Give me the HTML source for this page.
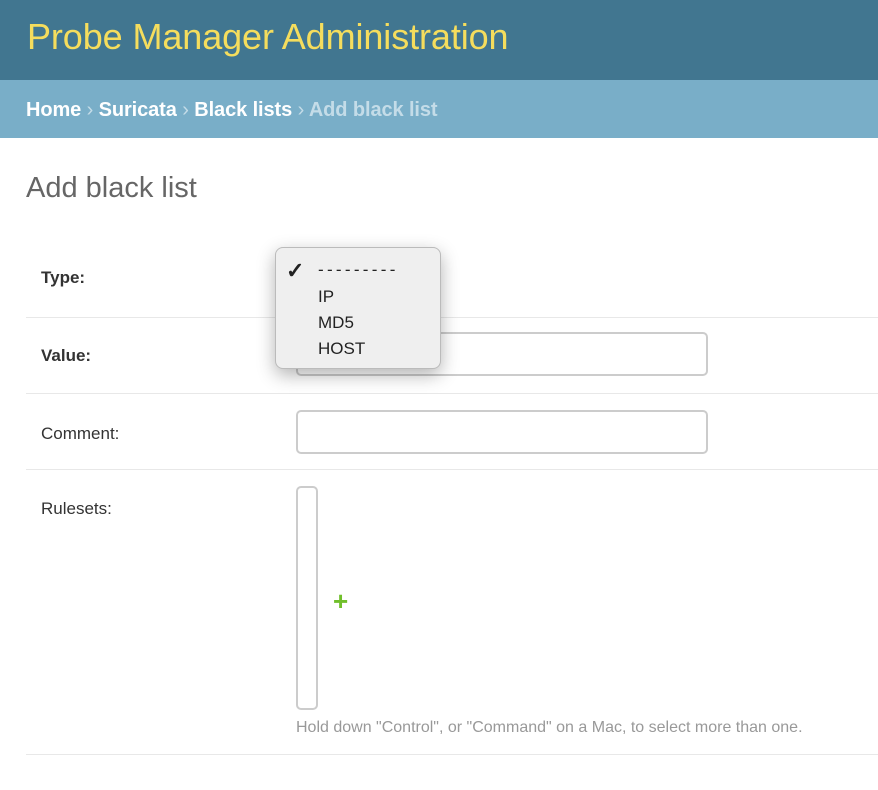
<!DOCTYPE html>
<html><head><style>
*{margin:0;padding:0;box-sizing:border-box}
body{width:878px;height:790px;background:#fff;font-family:"Liberation Sans",sans-serif;position:relative;overflow:hidden;color:#333}
#hdr{position:absolute;left:0;top:0;width:878px;height:80px;background:#417690}
#hdr h1{position:absolute;left:27px;top:16px;font-size:36px;font-weight:normal;color:#f5dd5d;letter-spacing:-0.1px}
#bc{position:absolute;left:0;top:80px;width:878px;height:58px;background:#79aec8;color:#fff;font-size:20px;font-weight:bold;padding:19px 26px;letter-spacing:-0.1px}
#bc .s{color:#c4dce8;font-weight:normal}
#bc .c{color:#c4dce8}
h2{position:absolute;left:26px;top:172px;font-size:29px;font-weight:normal;color:#666}
.lbl{position:absolute;left:41px;font-size:17px;color:#333}
.b{font-weight:bold}
.line{position:absolute;left:26px;width:852px;height:1px;background:#e8e8e8}
.inp{position:absolute;border:2px solid #ccc;border-radius:5px;background:#fff}
#menu{position:absolute;left:275px;top:247px;width:166px;height:122px;background:#efefef;border:1px solid #bbb;border-radius:8px;box-shadow:0 6px 18px rgba(0,0,0,.3);font-size:17px;color:#222}
#menu div{position:absolute;left:42px}
</style></head><body>
<div id="hdr"><h1>Probe Manager Administration</h1></div>
<div id="bc">Home <span class="s">›</span> Suricata <span class="s">›</span> Black lists <span class="s">›</span> <span class="c">Add black list</span></div>
<h2>Add black list</h2>
<div class="lbl b" style="top:268px">Type:</div>
<div class="line" style="top:317px"></div>
<div class="lbl b" style="top:346px">Value:</div>
<div class="inp" style="left:296px;top:332px;width:412px;height:44px"></div>
<div class="line" style="top:393px"></div>
<div class="lbl" style="top:424px">Comment:</div>
<div class="inp" style="left:296px;top:410px;width:412px;height:44px"></div>
<div class="line" style="top:469px"></div>
<div class="lbl" style="top:499px">Rulesets:</div>
<div class="inp" style="left:296px;top:486px;width:22px;height:224px"></div>
<div style="position:absolute;left:333px;top:586px;color:#70bf2b;font-size:26px;font-weight:bold">+</div>
<div style="position:absolute;left:296px;top:719px;font-size:16px;color:#999;white-space:nowrap">Hold down "Control", or "Command" on a Mac, to select more than one.</div>
<div class="line" style="top:754px"></div>
<div id="menu">
<div style="left:10px;top:10px;font-size:22px;font-weight:bold">✓</div>
<div style="top:12px;letter-spacing:3.3px">---------</div>
<div style="top:39px">IP</div>
<div style="top:65px">MD5</div>
<div style="top:91px">HOST</div>
</div>
</body></html>
